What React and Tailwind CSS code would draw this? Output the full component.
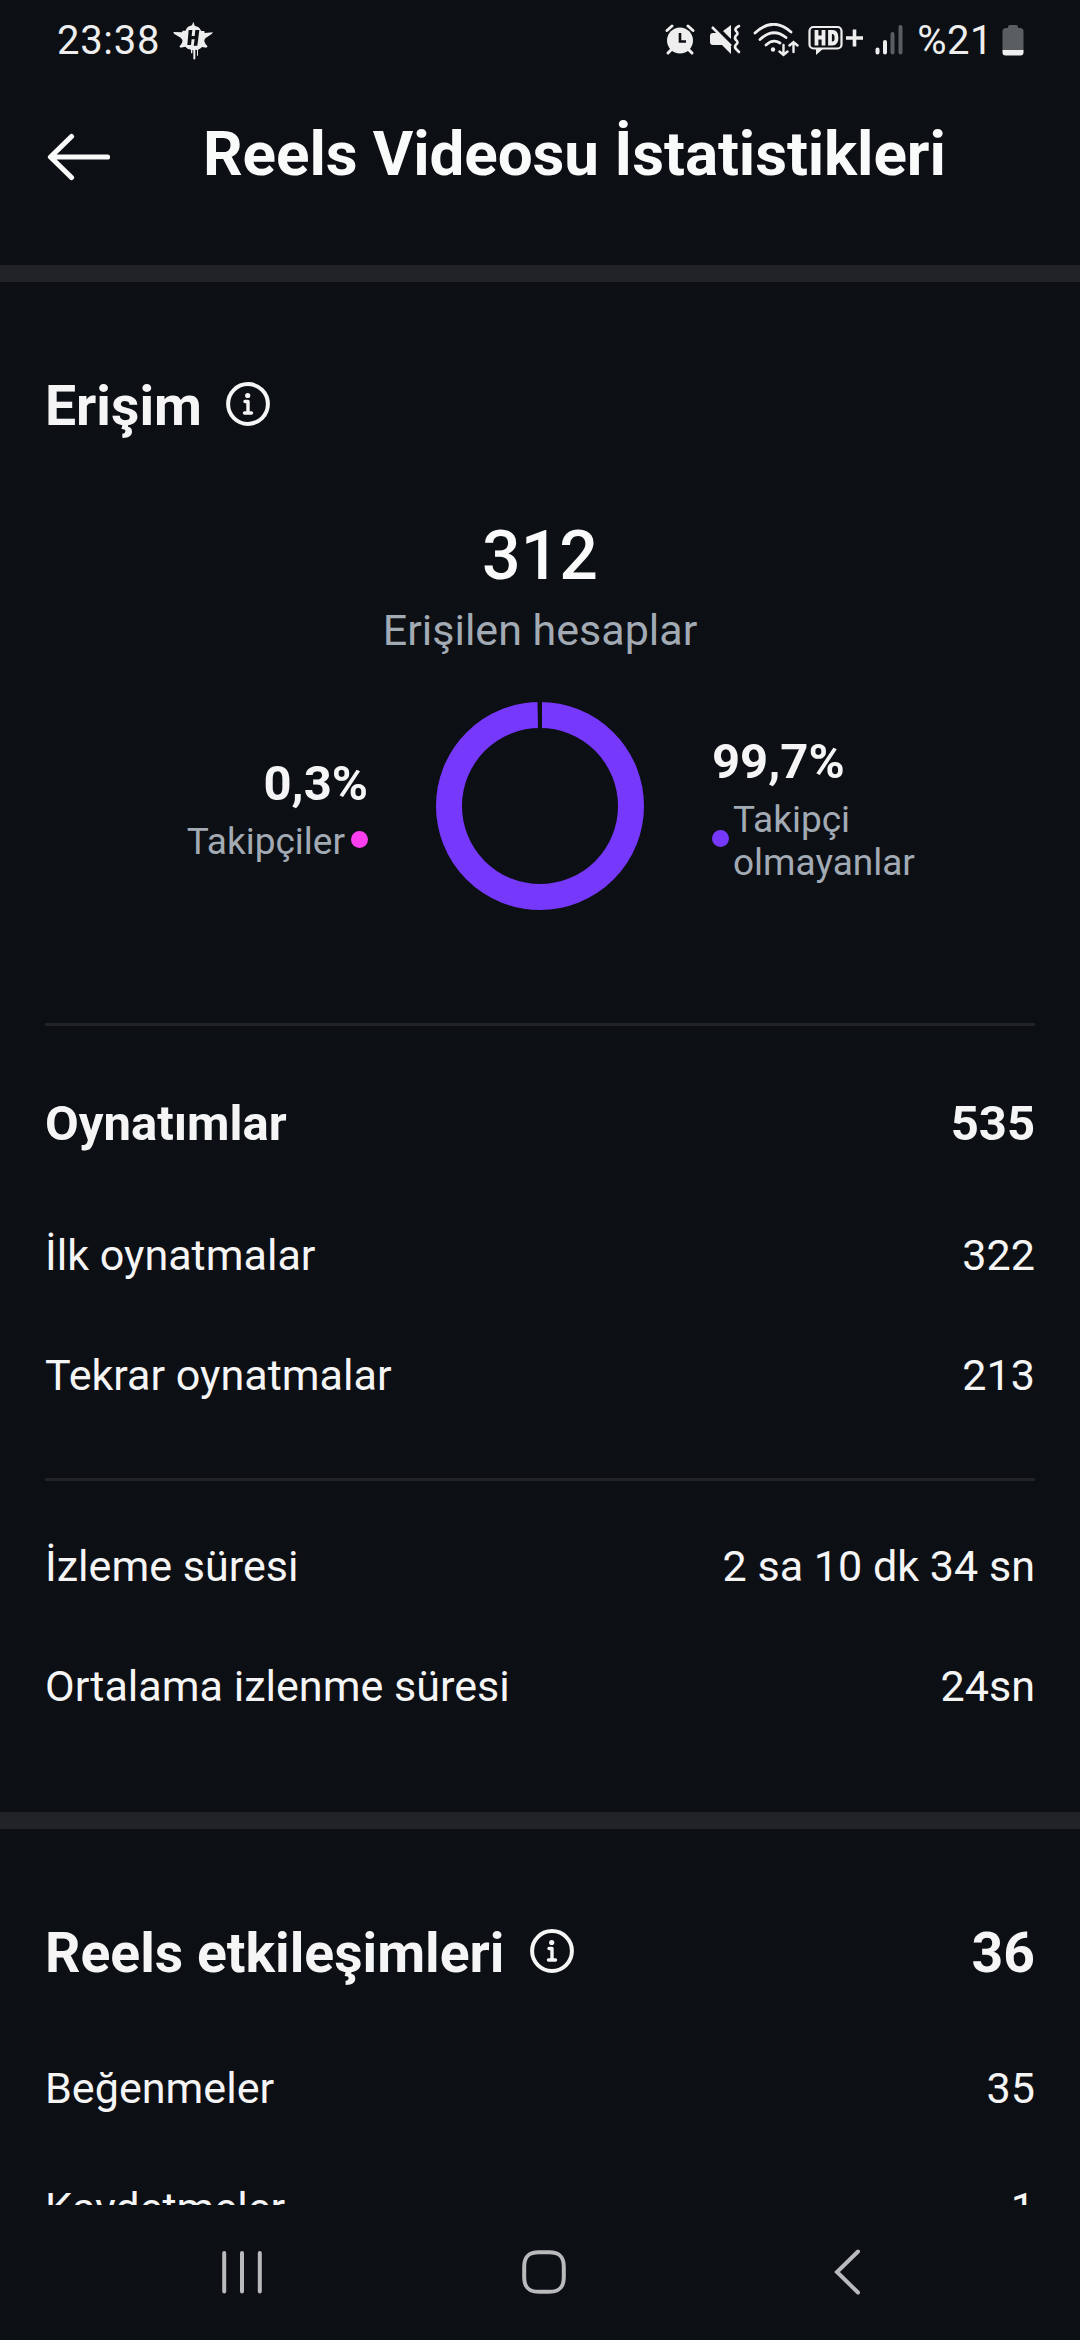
const AppEmblem = () => (
  <svg width="46" height="46" viewBox="0 0 138 138" className="ml-[9px] mt-[2px]">
    <path
      d="M67 11l4 12q14 3 18 13l2 3h9l1 6 25-2-4 5-18 12-4 6q-1 9 10 19l-4 4-13-2q-6 6-12 8v18h-3V96l-5-1v27l-3 3-3-3V97l-3-1v10h-4V95q-12-2-17-9l-14 3-4-4q11-11 9-20l-5-6-20-12-2-5 26 1 2-5h8l2-3q4-10 18-13z"
      fill="#eeeeee"
    />
    <path d="M53 36h11l-2 18h9l2-18h12l-6 47H68l3-19h-9l-2 17H49z" fill="#0c0f14" />
  </svg>
);

const AlarmIcon = () => (
  <svg width="30" height="32" viewBox="0 0 30 32" fill="none" stroke="#eeeeee" strokeLinecap="round">
    <circle cx="15" cy="16.500" r="13" fill="#eeeeee" stroke="none" />
    <path d="M2 6.500l5-4.500M28 6.500l-5-4.500" strokeWidth="3" />
    <path d="M6 26l-3 3M24 26l3 3" strokeWidth="3" />
    <path d="M15 9v8.500h6" stroke="#0c0f14" strokeWidth="2.600" strokeLinecap="butt" />
  </svg>
);

const MuteIcon = () => (
  <svg width="32" height="32" viewBox="0 0 32 32" fill="none" stroke="#eeeeee">
    <path d="M1 12q0-3 3-3h4l14 14v7l-9-9H4q-3 0-3-3zM14 7l8-6v14z" fill="#eeeeee" stroke="none" />
    <path d="M3 3l19 19" strokeWidth="2.500" />
    <path d="M30 2q-5 2.500-3 5 3 2.500 0 4.500-2 2.500 0 4.500 3 2.500 0 4.500-2 2.500 0 4.500 2 2 3 3" strokeWidth="2.600" strokeLinecap="round" />
  </svg>
);

const WifiIcon = () => (
  <svg width="46" height="34" viewBox="0 0 46 34" fill="none" stroke="#eeeeee" strokeWidth="2.800" strokeLinecap="round">
    <path d="M2 10Q20-7 38 9M7 16.500Q20 4 33 14.500M13 22Q20 15.500 27 20" />
    <circle cx="20" cy="26.500" r="2.200" fill="#eeeeee" stroke="none" />
    <path d="M30.500 22v10M26.500 28.500l4 3.500 4-3.500M40.500 29V19M36.500 22.500l4-3.500 4 3.500" strokeWidth="2.400" />
  </svg>
);

const HdIcon = () => (
  <svg width="56" height="32" viewBox="0 0 56 32" fill="none" stroke="#eeeeee">
    <rect x="1.500" y="3" width="32" height="21.500" rx="4" strokeWidth="2.200" />
    <path d="M8 24h8l-8 7z" fill="#eeeeee" stroke="none" />
    <path d="M8.500 6v15.500M15.500 6v15.500M8 13.500h8M22 8v11.500h2.500q4 0 4-5.750t-4-5.750z" strokeWidth="3.800" />
    <path d="M46.500 5.500v17M38 14h17" strokeWidth="3.600" />
  </svg>
);

const SignalIcon = () => (
  <svg width="29" height="30" viewBox="0 0 29 30" strokeWidth="4" strokeLinecap="round">
    <path d="M2.500 24.500v3M10 17v10.500" stroke="#eeeeee" />
    <path d="M17.500 9v18.500M25.500 2v25.500" stroke="#5b5e61" />
  </svg>
);

const BatteryIcon = () => (
  <svg width="22" height="32" viewBox="0 0 22 32">
    <path d="M6 4V3q0-2 2-2h6q2 0 2 2v1h2q3.500 0 3.500 3.500V27H.5V7.500Q.5 4 4 4z" fill="#5b5e61" />
    <path d="M.5 26h21v2.500q0 3-3 3h-15q-3 0-3-3z" fill="#eeeeee" />
  </svg>
);

const BackArrow = () => (
  <svg width="64" height="48" viewBox="0 0 64 48" fill="none" stroke="#f9fafa" strokeWidth="5.200" strokeLinecap="round" strokeLinejoin="round">
    <path d="M24.500 3.500L3.500 24l21 20.500M4 24h56.500" />
  </svg>
);

const InfoIcon = () => (
  <svg width="44" height="44" viewBox="0 0 44 44" fill="none" stroke="#f5f5f5">
    <circle cx="22" cy="22" r="19.900" strokeWidth="4" />
    <circle cx="21.700" cy="13.500" r="2.600" fill="#f5f5f5" stroke="none" />
    <path d="M19 19.500h3v11M18.500 31h7" strokeWidth="3.400" strokeLinecap="round" strokeLinejoin="round" />
  </svg>
);

const Donut = () => (
  <svg width="208" height="208" viewBox="0 0 208 208" className="shrink-0">
    <circle cx="104" cy="104" r="91" fill="none" stroke="#7638fa" strokeWidth="26" />
    <path d="M101.500 0h4.500v27h-4z" fill="#0c0f14" />
  </svg>
);

const Row = ({ label, value }) => (
  <div className="flex h-[120px] justify-between text-[43.1px] leading-[122px]">
    <span>{label}</span>
    <span>{value}</span>
  </div>
);

const Band = () => <div className="h-[17px] shrink-0 bg-[#222327]" />;
const Rule = () => <div className="h-[3px] bg-[#222327]" />;

export default function App() {
  return (
    <div className="flex h-[2340px] w-[1080px] flex-col overflow-hidden bg-[#0c0f14] font-['Roboto',sans-serif] text-[#f5f5f5]">
      <div className="flex h-[80px] shrink-0 items-center pl-[57px] pr-[56px] text-[40px] text-[#eeeeee]">
        <span className="w-[105px] whitespace-nowrap pt-[2px] leading-[80px] tracking-[0.7px]">23:38</span>
        <AppEmblem />
        <div className="ml-auto flex items-center">
          <AlarmIcon />
          <span className="w-[14px]" />
          <MuteIcon />
          <span className="w-[12px]" />
          <WifiIcon />
          <span className="w-[9px]" />
          <HdIcon />
          <span className="w-[11px]" />
          <SignalIcon />
          <span className="ml-[13px] pt-[2px] leading-[80px] tracking-[0.5px]">%21</span>
          <span className="w-[9px]" />
          <BatteryIcon />
        </div>
      </div>

      <header className="flex h-[185px] shrink-0 items-start pl-[47px]">
        <div className="mt-[53px]"><BackArrow /></div>
        <h1 className="ml-[92px] mt-[34px] text-[62px] font-bold leading-[80px] tracking-[-0.1px] text-[#f9fafa]">Reels Videosu İstatistikleri</h1>
      </header>
      <Band />

      <section className="flex h-[1530px] shrink-0 flex-col px-[45px]">
        <div className="mt-[84px] flex h-[80px] items-center">
          <h2 className="pt-[2px] text-[55.3px] font-bold leading-[80px]">Erişim</h2>
          <div className="ml-[24px] mt-[-5px]"><InfoIcon /></div>
        </div>
        <div className="mt-[70px] flex flex-col items-center">
          <div className="text-[68px] font-medium leading-[80px] text-[#fafafa]">312</div>
          <div className="mt-[8px] text-[43px] leading-[52px] text-[#a2aab4]">Erişilen hesaplar</div>
        </div>
        <div className="mt-[46px] flex h-[208px]">
          <div className="flex w-[323px] flex-col items-end pt-[52px]">
            <div className="text-[49px] font-bold leading-[60px]">0,3%</div>
            <div className="flex items-center text-[37px] leading-[56px] text-[#a2aab4]">
              <span>Takipçiler</span>
              <span className="ml-[6px] mt-[-5px] h-[17px] w-[17px] rounded-full bg-[#fb3ff0]" />
            </div>
          </div>
          <div className="ml-[68px]"><Donut /></div>
          <div className="ml-[68px] pt-[30px]">
            <div className="text-[49px] font-bold leading-[60px]">99,7%</div>
            <div className="mt-[6px] flex items-center text-[37px] leading-[43px] text-[#a2aab4]">
              <span className="mr-[4px] mt-[-5px] h-[17px] w-[17px] rounded-full bg-[#7638fa]" />
              <span>Takipçi<br />olmayanlar</span>
            </div>
          </div>
        </div>
        <div className="mt-[113px]"><Rule /></div>
        <div className="mt-[58px] flex h-[80px] justify-between text-[49px] font-bold leading-[80px]">
          <span>Oynatımlar</span>
          <span>535</span>
        </div>
        <div className="mt-[31px]">
          <Row label="İlk oynatmalar" value="322" />
          <Row label="Tekrar oynatmalar" value="213" />
        </div>
        <div className="mt-[43px]"><Rule /></div>
        <div className="mt-[25px]">
          <Row label="İzleme süresi" value="2 sa 10 dk 34 sn" />
          <Row label="Ortalama izlenme süresi" value="24sn" />
        </div>
      </section>
      <Band />

      <section className="h-[376px] shrink-0 overflow-hidden px-[45px]">
        <div className="mt-[84px] flex h-[80px] items-center text-[55.3px] font-bold leading-[80px]">
          <h2 className="pt-[2px]">Reels etkileşimleri</h2>
          <div className="ml-[25px] mt-[-5px]"><InfoIcon /></div>
          <span className="ml-auto pt-[2px]">36</span>
        </div>
        <div className="mt-[35px]">
          <Row label="Beğenmeler" value="35" />
          <Row label="Kaydetmeler" value="1" />
        </div>
      </section>

      <nav className="flex h-[135px] shrink-0 items-center pb-[2px] pl-[222px]">
        <svg width="40" height="46" viewBox="0 0 40 46" stroke="#b8babb" strokeWidth="4" strokeLinecap="round">
          <path d="M2.200 4v38.500M20 4v38.500M37.800 4v38.500" />
        </svg>
        <svg width="44" height="44" viewBox="0 0 44 44" fill="none" stroke="#b8babb" strokeWidth="4" className="ml-[260px]">
          <path d="M17 2.200H27C37.500 2.200 41.800 6.500 41.800 17V27C41.800 37.500 37.500 41.800 27 41.800H17C6.500 41.800 2.200 37.500 2.200 27V17C2.200 6.500 6.500 2.200 17 2.200z" />
        </svg>
        <svg width="28" height="48" viewBox="0 0 28 48" fill="none" stroke="#b8babb" strokeWidth="4" strokeLinecap="round" className="ml-[267px]">
          <path d="M25 3.500L4 24l21 20.500" />
        </svg>
      </nav>
    </div>
  );
}
